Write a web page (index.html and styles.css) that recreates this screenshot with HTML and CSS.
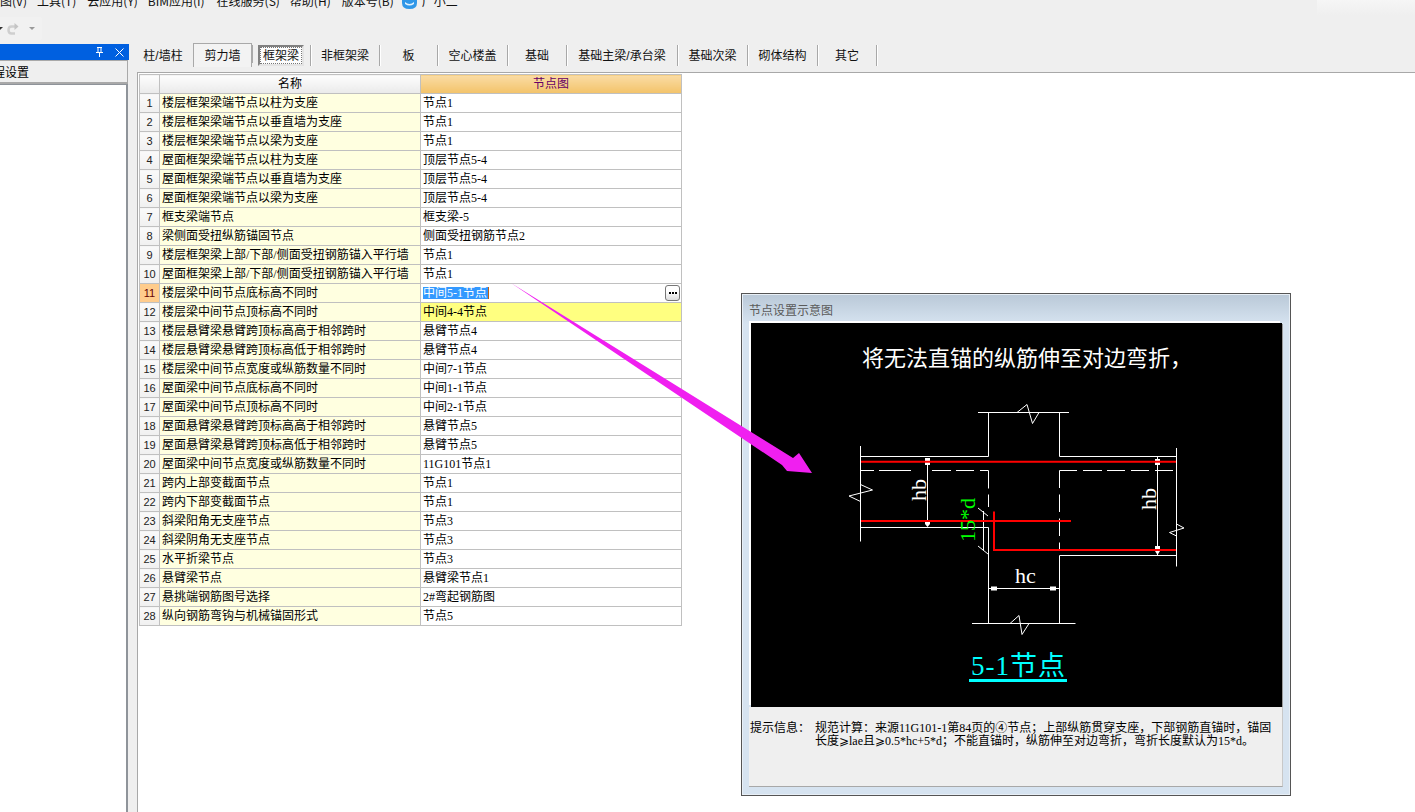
FILE: index.html
```html
<!DOCTYPE html>
<html lang="zh-CN">
<head>
<meta charset="utf-8">
<title>节点设置</title>
<link rel="stylesheet" href="styles.css">
</head>
<body>
<header class="menubar">
  <nav class="menu">
    <span class="m1">图(V)</span><span class="m2">工具(T)</span><span class="m3">云应用(Y)</span><span class="m4">BIM应用(I)</span><span class="m5">在线服务(S)</span><span class="m6">帮助(H)</span><span class="m7">版本号(B)</span>
    <svg class="logo" viewBox="0 0 15 10" width="15" height="10"><path d="M0 0H15V3Q15 9 7.500 9Q0 9 0 3Z" fill="#2f97e8"/><path d="M3 2Q7.500 6 12 2V4Q7.500 7 3 4Z" fill="#dff1ff"/></svg>
    <span class="m8">广小二</span>
  </nav>
  <div class="corner"></div>
</header>
<div class="toolbar">
  <div class="toolgroup">
    <span class="drop"></span>
    <svg class="redo" viewBox="0 0 12 12" width="12" height="12"><path d="M8 3.500H4.500Q1.500 3.500 1.500 7Q1.500 10.500 4.500 10.500H8" fill="none" stroke="#cfcfcf" stroke-width="2.500"/><path d="M7.500 0L11.500 3.500L7.500 7Z" fill="#c4c4c4"/></svg>
    <span class="drop light"></span>
  </div>
</div>
<main class="main">
  <aside class="side">
    <div class="side-title">
      <svg viewBox="0 0 9 10" width="9" height="10"><path d="M2 0.500H7M3 0.500V5M6 0.500V5M1 5.500H8M4.500 5.500V10" fill="none" stroke="#fff"/></svg>
      <svg viewBox="0 0 9 9" width="9" height="9"><path d="M0.500 0.500L8.500 8.500M8.500 0.500L0.500 8.500" fill="none" stroke="#fff"/></svg>
    </div>
    <div class="side-btn">工程设置</div>
    <div class="side-list"></div>
  </aside>
  <section class="content">
    <div class="tabs">
      <div class="tab t-first">柱/墙柱</div>
      <div class="tab t-raised">剪力墙</div>
      <div class="tab t-wrap"><span class="t-pressed">框架梁</span></div>
      <div class="tab t-sep">非框架梁</div>
      <div class="tab t-sep">板</div>
      <div class="tab t-sep">空心楼盖</div>
      <div class="tab t-sep">基础</div>
      <div class="tab t-sep">基础主梁/承台梁</div>
      <div class="tab t-sep">基础次梁</div>
      <div class="tab t-sep">砌体结构</div>
      <div class="tab t-sep">其它</div>
    </div>
    <div class="sheet">
      <table class="grid">
        <colgroup><col class="c-num"><col class="c-name"><col class="c-val"></colgroup>
        <thead><tr><th class="h-blank"></th><th class="h-name">名称</th><th class="h-val">节点图</th></tr></thead>
        <tbody>
          <tr><td class="num">1</td><td class="name">楼层框架梁端节点以柱为支座</td><td class="val">节点1</td></tr>
          <tr><td class="num">2</td><td class="name">楼层框架梁端节点以垂直墙为支座</td><td class="val">节点1</td></tr>
          <tr><td class="num">3</td><td class="name">楼层框架梁端节点以梁为支座</td><td class="val">节点1</td></tr>
          <tr><td class="num">4</td><td class="name">屋面框架梁端节点以柱为支座</td><td class="val">顶层节点5-4</td></tr>
          <tr><td class="num">5</td><td class="name">屋面框架梁端节点以垂直墙为支座</td><td class="val">顶层节点5-4</td></tr>
          <tr><td class="num">6</td><td class="name">屋面框架梁端节点以梁为支座</td><td class="val">顶层节点5-4</td></tr>
          <tr><td class="num">7</td><td class="name">框支梁端节点</td><td class="val">框支梁-5</td></tr>
          <tr><td class="num">8</td><td class="name">梁侧面受扭纵筋锚固节点</td><td class="val">侧面受扭钢筋节点2</td></tr>
          <tr><td class="num">9</td><td class="name">楼层框架梁上部/下部/侧面受扭钢筋锚入平行墙</td><td class="val">节点1</td></tr>
          <tr><td class="num">10</td><td class="name">屋面框架梁上部/下部/侧面受扭钢筋锚入平行墙</td><td class="val">节点1</td></tr>
          <tr><td class="num cur">11</td><td class="name">楼层梁中间节点底标高不同时</td><td class="val"><div class="edit"><span class="sel">中间5-1节点</span><span class="more"><i></i><i></i><i></i></span></div></td></tr>
          <tr><td class="num">12</td><td class="name">楼层梁中间节点顶标高不同时</td><td class="val hl">中间4-4节点</td></tr>
          <tr><td class="num">13</td><td class="name">楼层悬臂梁悬臂跨顶标高高于相邻跨时</td><td class="val">悬臂节点4</td></tr>
          <tr><td class="num">14</td><td class="name">楼层悬臂梁悬臂跨顶标高低于相邻跨时</td><td class="val">悬臂节点4</td></tr>
          <tr><td class="num">15</td><td class="name">楼层梁中间节点宽度或纵筋数量不同时</td><td class="val">中间7-1节点</td></tr>
          <tr><td class="num">16</td><td class="name">屋面梁中间节点底标高不同时</td><td class="val">中间1-1节点</td></tr>
          <tr><td class="num">17</td><td class="name">屋面梁中间节点顶标高不同时</td><td class="val">中间2-1节点</td></tr>
          <tr><td class="num">18</td><td class="name">屋面悬臂梁悬臂跨顶标高高于相邻跨时</td><td class="val">悬臂节点5</td></tr>
          <tr><td class="num">19</td><td class="name">屋面悬臂梁悬臂跨顶标高低于相邻跨时</td><td class="val">悬臂节点5</td></tr>
          <tr><td class="num">20</td><td class="name">屋面梁中间节点宽度或纵筋数量不同时</td><td class="val">11G101节点1</td></tr>
          <tr><td class="num">21</td><td class="name">跨内上部变截面节点</td><td class="val">节点1</td></tr>
          <tr><td class="num">22</td><td class="name">跨内下部变截面节点</td><td class="val">节点1</td></tr>
          <tr><td class="num">23</td><td class="name">斜梁阳角无支座节点</td><td class="val">节点3</td></tr>
          <tr><td class="num">24</td><td class="name">斜梁阴角无支座节点</td><td class="val">节点3</td></tr>
          <tr><td class="num">25</td><td class="name">水平折梁节点</td><td class="val">节点3</td></tr>
          <tr><td class="num">26</td><td class="name">悬臂梁节点</td><td class="val">悬臂梁节点1</td></tr>
          <tr><td class="num">27</td><td class="name">悬挑端钢筋图号选择</td><td class="val">2#弯起钢筋图</td></tr>
          <tr><td class="num">28</td><td class="name">纵向钢筋弯钩与机械锚固形式</td><td class="val">节点5</td></tr>
        </tbody>
      </table>
    </div>
  </section>
</main>

<section class="dialog">
  <div class="dialog-title">节点设置示意图</div>
  <svg class="drawing" viewBox="751 323 531 384" width="531" height="384">
    <rect x="751" y="323" width="531" height="384" fill="#000"/>
    <text class="d-head" x="862" y="366">将无法直锚的纵筋伸至对边弯折，</text>
    <g fill="none" stroke="#fff" stroke-width="1">
      <path d="M978 412.500H1069M988.500 412.500V456.500H861M1059.500 412.500V456.500H1176"/>
      <path d="M860.500 446V541.500M1176.500 448V566.500"/>
      <path d="M861 527.500H988.500V623.500M1059.500 623.500V555.500H1176M972 623.500H1075.500"/>
      <path d="M861 470.500H874M879 470.500H911M932 470.500H951M956 470.500H974M980 470.500H988.500V488.500M988.500 494.500V507"/>
      <path d="M1059.500 488V470.500H1077M1083 470.500H1102M1107 470.500H1125M1131 470.500H1149M1155 470.500H1173M1059.500 494.500V512M1059.500 518.500V536M1059.500 542.500V550"/>
      <path d="M1017 412.500L1027 404.500L1032.500 423.500L1039 412.500"/>
      <path d="M1010 623.500L1019 615.500L1022 634.500L1029 623.500"/>
      <path d="M860.500 484.500L872.500 490L849 496L860.500 501.500"/>
      <path d="M1176.500 524L1184 528L1169.500 532.500L1176.500 536"/>
      <path d="M927.500 461V521M1157.500 457V555M988 588.500H1059M983.500 511V550M978 508L988 516M978 546L988 554"/>
    </g>
    <g fill="#fff">
      <path d="M925 458H930V465H925ZM925 521H930V524L927.500 527L925 524Z"/>
      <path d="M1155 459H1160V465H1155ZM1155 546H1160V551L1157.500 555L1155 551Z"/>
      <rect x="991" y="586.500" width="6" height="4"/>
      <rect x="1050" y="586.500" width="6" height="4"/>
    </g>
    <g fill="none" stroke="#f00" stroke-width="2">
      <path d="M861 461.800H1176M861 521H1071"/>
      <path d="M994 511.500V550H1176"/>
    </g>
    <text class="d-dim" transform="translate(926 501) rotate(-90)">hb</text>
    <text class="d-dim" transform="translate(1156 510) rotate(-90)">hb</text>
    <text class="d-dim" x="1015" y="583">hc</text>
    <text class="d-green" transform="translate(975 542) rotate(-90)">15*d</text>
    <text class="d-node" x="971" y="675">5-1节点</text>
    <rect x="969" y="679" width="98" height="3" fill="#0ff"/>
  </svg>
  <div class="info">
    <div class="info-label">提示信息：</div>
    <div class="info-text">规范计算：来源11G101-1第84页的④节点；上部纵筋贯穿支座，下部钢筋直锚时，锚固<br>长度⩾lae且⩾0.5*hc+5*d；不能直锚时，纵筋伸至对边弯折，弯折长度默认为15*d。</div>
  </div>
</section>

<svg class="arrow" viewBox="0 0 330 210" width="330" height="210"><polygon points="1,3 283,178 289,173 302,193 277,191 272,185" fill="#f01ff0"/></svg>
</body>
</html>
```
FILE: styles.css
```css
* { box-sizing: border-box; }
html, body { margin: 0; height: 812px; overflow: hidden; }
body {
  background: #efefef;
  color: #000;
  font: 12px/14px "Liberation Serif", "Noto Sans CJK SC", sans-serif;
  display: flex;
  flex-direction: column;
}
.menubar { height: 17px; display: flex; justify-content: space-between; align-items: flex-start; overflow: hidden; }
.menu { display: flex; align-items: flex-start; height: 10px; overflow: hidden; font-family: "Noto Sans CJK SC", sans-serif; line-height: 16px; color: #111; }
.menu span { display: block; margin-top: -7px; white-space: nowrap; }
.m2 { margin-left: 10px; }
.m3 { margin-left: 11px; }
.m4 { margin-left: 10px; }
.m5 { margin-left: 12px; }
.m6 { margin-left: 10px; }
.m7 { margin-left: 11px; }
.menu .logo { margin: 0 5px 0 8px; }
.corner { width: 98px; height: 15px; background: linear-gradient(#f6f6f6, #efefef); }

.toolbar { height: 27px; flex: none; }
.toolgroup { width: 42px; height: 23px; background: #f1f1f1; display: flex; align-items: center; gap: 4px; border-radius: 0 2px 2px 0; }
.drop { width: 0; height: 0; margin-left: -3px; border: 3px solid transparent; border-top: 3px solid #333; border-bottom: 0; }
.drop.light { border-top-color: #999; margin-left: 6px; }
.redo { flex: none; }

.main { flex: 1; display: flex; min-height: 0; }
.side { width: 128px; flex: none; display: flex; flex-direction: column; }
.side-title { height: 16px; margin-right: -1px; background: #0060e0; display: flex; justify-content: flex-end; align-items: center; gap: 11px; padding-right: 5px; }
.side-btn { height: 24px; background: #efefef; border: 1px solid #a9a9a9; border-left: 0; border-bottom-width: 2px; line-height: 22px; font-family: "Noto Sans CJK SC", sans-serif; text-indent: -19px; white-space: nowrap; overflow: hidden; }
.side-list { flex: 1; background: #fff; border-right: 2px solid #8f949a; border-top: 1px solid #8f949a; }

.content { flex: 1; margin-left: 9px; min-width: 0; display: flex; flex-direction: column; border-left: 1px solid #a8a8a8; }
.tabs { height: 29px; flex: none; border-bottom: 1px solid #a8a8a8; display: grid; grid-template-columns: 54px 62px 56px 69px 58px 70px 59px 111px 70px 70px 59px; padding: 1px 0 0 2px; margin-left: -1px; width: calc(100% + 1px); background: #efefef; }
.tab { height: 21px; display: flex; align-items: center; justify-content: center; white-space: nowrap; font-family: "Liberation Sans", "Noto Sans CJK SC", sans-serif; color: #111; }
.t-first { padding-right: 6px; }
.t-raised { height: 24px; margin: -2px 3px 0 0; border: 1px solid #a9a9a9; border-bottom: 0; background: #f3f3f3; box-shadow: 4px -1px 0 -3px #a9a9a9; }
.t-wrap { justify-content: flex-start; padding-left: 3px; border-right: 1px solid #a8a8a8; box-shadow: 1px 0 0 #fff; }
.t-pressed { width: 46px; height: 21px; line-height: 19px; text-align: center; background: #fdfdfd; border: 2px solid; border-color: #808080 #e4e4e4 #e4e4e4 #808080; outline: 1px dotted #777; outline-offset: -3px; }
.t-sep { border-right: 1px solid #a8a8a8; box-shadow: 1px 0 0 #fff; }

.sheet { flex: 1; background: #fff; padding: 1px 0 0 1px; min-height: 0; }
.grid { border-collapse: collapse; table-layout: fixed; width: 542px; }
.c-num { width: 20px; }
.c-name { width: 261px; }
.c-val { width: 261px; }
.grid th, .grid td { border: 1px solid #c0c0c0; height: 19px; padding: 0; font-weight: normal; white-space: nowrap; overflow: hidden; }
.grid thead th { height: 19px; }
.h-blank, .h-name { background: linear-gradient(#fdfdfd, #eaeaea); }
.h-val { background: linear-gradient(#fadca5, #f3c369); color: #660066; }
.num { background: linear-gradient(#fafafa, #f0f0f0); text-align: center; font-family: "Liberation Sans", sans-serif; font-size: 11px; color: #222; }
.num.cur { background: #ffcc8c; color: #660000; }
.name { background: #ffffe0; padding-left: 2px !important; }
.val { background: #fff; padding-left: 2px !important; }
.val.hl { background: #ffff80; }
.edit { display: flex; justify-content: space-between; align-items: center; height: 17px; padding-right: 1px; }
.sel { background: #3399ff; color: #fff; height: 12px; line-height: 12px; padding-right: 1px; border-right: 1px solid #c06010; }
.more { width: 15px; height: 16px; border: 1px solid #777; border-radius: 3px; background: linear-gradient(#fff 40%, #ddd); display: flex; align-items: center; justify-content: center; gap: 1px; }
.more i { width: 2px; height: 2px; background: #000; display: block; }

.dialog { position: absolute; left: 741px; top: 293px; width: 550px; height: 503px; border: 1px solid #555; background: linear-gradient(#b9c8d7, #d6e3f0 6%, #d6e3f0); padding: 0 7px; box-shadow: inset 0 0 0 1px #e8eff6; }
.dialog-title { height: 29px; padding: 9px 0 0 0; color: #5a5a5a; font-family: "Noto Sans CJK SC", sans-serif; line-height: 14px; white-space: nowrap; }
.drawing { display: block; margin-left: 2px; box-shadow: -2px -2px 0 #fff, 1px 1px 0 #9a9a9a; }
.d-head { font: 22px "Noto Sans CJK SC", sans-serif; fill: #fff; }
.d-dim { font: 22px "Liberation Serif", serif; fill: #fff; }
.d-green { font: 22px "Liberation Serif", serif; fill: #0f0; }
.d-node { font: 27px "Liberation Serif", "Noto Sans CJK SC", serif; fill: #0ff; letter-spacing: 1px; }
.info { height: 80px; background: #efefef; border-bottom: 1px solid #a8a8a8; border-right: 1px solid #c8c8c8; display: flex; padding: 15px 0 0 1px; line-height: 13px; }
.info-label { width: 65px; flex: none; }
.info-text { white-space: nowrap; }

.arrow { position: absolute; left: 510px; top: 280px; pointer-events: none; }
```
